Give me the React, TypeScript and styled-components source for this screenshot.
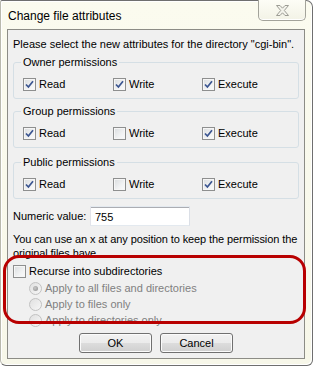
import React from 'react';
import styled, { createGlobalStyle } from 'styled-components';

const GlobalStyle = createGlobalStyle`
  html, body {
    margin: 0;
    padding: 0;
    background: #ffffff;
  }
  body {
    font-family: "Liberation Sans", Arial, sans-serif;
    font-size: 11px;
    color: #000000;
  }
`;

const Window = styled.div`
  box-sizing: border-box;
  width: 313px;
  height: 366px;
  display: flex;
  flex-direction: column;
  background: linear-gradient(180deg, #fbfbef 0%, #f7f7e9 100%);
  border: 1px solid #6f6f6f;
  border-left-color: #b9b9ad;
  border-radius: 2px 7px 6px 6px;
  box-shadow: inset -1px -1px 0 #ffffff, inset 1px 1px 0 #ffffff;
`;

const TitleBar = styled.div`
  flex: none;
  height: 28px;
  display: flex;
  justify-content: space-between;
  align-items: flex-start;
  padding-left: 7px;
`;

const Title = styled.span`
  margin-top: 8px;
  font-size: 12px;
  line-height: 15px;
`;

const CloseButton = styled.div`
  box-sizing: border-box;
  width: 48px;
  height: 21px;
  margin-top: -1px;
  margin-right: 6px;
  display: flex;
  align-items: center;
  justify-content: center;
  border: 1px solid #a3a39a;
  border-top: none;
  border-radius: 0 0 5px 5px;
  background: linear-gradient(180deg, #fdfdf6 0%, #f3f3e6 100%);
  box-shadow: inset 0 -1px 0 #ffffff;
`;

const Client = styled.div`
  box-sizing: border-box;
  margin: 0 7px 6px 6px;
  flex: 1;
  min-height: 0;
  display: flex;
  flex-direction: column;
  padding: 7px 5px 0 5px;
  background: #f0f0f0;
  border: 1px solid #8c8c86;
`;

const Text = styled.div<{ $muted?: boolean }>`
  font-size: 11px;
  line-height: 15px;
  color: ${(p) => (p.$muted ? '#808080' : '#000000')};
  white-space: nowrap;
`;

const Group = styled.fieldset<{ $top: number }>`
  margin: ${(p) => p.$top}px 0 0 0;
  padding: 6px 9px 6px 9px;
  border: 1px solid #d5dfe5;
  border-radius: 3px;
  min-width: 0;
`;

const Legend = styled.legend`
  padding: 0 2px;
  margin-left: -2px;
  font-size: 11px;
  line-height: 15px;
`;

const PermRow = styled.div`
  display: grid;
  grid-template-columns: 90px 89px auto;
  align-items: center;
`;

const Option = styled.label`
  display: flex;
  align-items: center;
  gap: 3px;
  height: 16px;
`;

const Box = styled.span`
  box-sizing: border-box;
  width: 13px;
  height: 13px;
  flex: none;
  display: flex;
  align-items: center;
  justify-content: center;
  border: 1px solid #8e8f8f;
  background: linear-gradient(135deg, #d9dcde 0%, #f1f2f3 60%, #fbfbfb 100%);
  box-shadow: inset 0 0 0 1px #f6f6f6;
`;

const Radio = styled.span`
  box-sizing: border-box;
  width: 13px;
  height: 13px;
  flex: none;
  border-radius: 50%;
  display: flex;
  align-items: center;
  justify-content: center;
  border: 1px solid #c2c2c2;
  background: linear-gradient(135deg, #e0e0e0 0%, #f7f7f7 100%);
`;

const Dot = styled.span`
  width: 5px;
  height: 5px;
  border-radius: 50%;
  background: radial-gradient(circle at 40% 40%, #c8c8c8, #8e8e8e);
`;

const NumericRow = styled.div`
  display: flex;
  align-items: center;
  margin-top: 7px;
`;

const NumLabel = styled.span`
  width: 77px;
  font-size: 11px;
  line-height: 15px;
`;

const NumInput = styled.div`
  box-sizing: border-box;
  width: 100px;
  height: 20px;
  padding: 1px 4px 0 4px;
  display: flex;
  align-items: center;
  background: #ffffff;
  border: 1px solid #abadb3;
  border-top-color: #e3e9ef;
  border-left-color: #e2e3ea;
  border-right-color: #dbdfe6;
  border-bottom-color: #e3e9ef;
  box-shadow: inset 0 1px 0 #abadb3;
`;

const Help = styled(Text)`
  margin-top: 6px;
  line-height: 14px;
  letter-spacing: -0.1px;
`;

const Recurse = styled.div`
  position: relative;
  margin-top: 3px;
  display: flex;
  flex-direction: column;
`;

const RadioList = styled.div`
  display: flex;
  flex-direction: column;
  padding-left: 16px;
  margin-top: 1px;
`;

const Highlight = styled.div`
  position: absolute;
  left: -10px;
  right: -7px;
  top: -8px;
  bottom: 4px;
  border: 3px solid #b80000;
  border-radius: 16px;
  pointer-events: none;
`;

const Buttons = styled.div`
  display: flex;
  justify-content: center;
  gap: 8px;
  margin-top: 5px;
`;

const Button = styled.button`
  box-sizing: border-box;
  width: 73px;
  height: 20px;
  padding: 0;
  font-family: inherit;
  font-size: 11px;
  color: #000000;
  border: 1px solid #707070;
  border-radius: 3px;
  background: linear-gradient(180deg, #f2f2f2 0%, #ebebeb 49%, #dddddd 50%, #cfcfcf 100%);
  box-shadow: inset 0 0 0 1px #fbfbfb;
`;

const Check = () => (
  <svg width="9" height="9" viewBox="0 0 9 9">
    <path d="M1 4.5 L3.4 7 L8 1.2" fill="none" stroke="#3b5591" strokeWidth="1.7" />
  </svg>
);

const CloseGlyph = () => (
  <svg width="15" height="11" viewBox="0 0 15 11">
    <path
      d="M1.5 0.5 H5 L7.5 3.2 L10 0.5 H13.5 L9.3 5.5 L13.5 10.5 H10 L7.5 7.8 L5 10.5 H1.5 L5.7 5.5 Z"
      fill="#f4f4ec"
      stroke="#9c9c94"
      strokeWidth="1"
    />
  </svg>
);

const CheckOption: React.FC<{ label: string; checked?: boolean }> = ({ label, checked }) => (
  <Option>
    <Box>{checked && <Check />}</Box>
    <span>{label}</span>
  </Option>
);

const groups = [
  { title: 'Owner permissions', values: [true, true, true], top: 3 },
  { title: 'Group permissions', values: [true, false, true], top: 5 },
  { title: 'Public permissions', values: [true, false, true], top: 7 },
];

const radios = [
  { label: 'Apply to all files and directories', selected: true },
  { label: 'Apply to files only', selected: false },
  { label: 'Apply to directories only', selected: false },
];

export default function App() {
  return (
    <>
      <GlobalStyle />
      <Window>
        <TitleBar>
          <Title>Change file attributes</Title>
          <CloseButton>
            <CloseGlyph />
          </CloseButton>
        </TitleBar>
        <Client>
          <Text>Please select the new attributes for the directory "cgi-bin".</Text>
          {groups.map((g) => (
            <Group key={g.title} $top={g.top}>
              <Legend>{g.title}</Legend>
              <PermRow>
                <CheckOption label="Read" checked={g.values[0]} />
                <CheckOption label="Write" checked={g.values[1]} />
                <CheckOption label="Execute" checked={g.values[2]} />
              </PermRow>
            </Group>
          ))}
          <NumericRow>
            <NumLabel>Numeric value:</NumLabel>
            <NumInput>755</NumInput>
          </NumericRow>
          <Help>
            You can use an x at any position to keep the permission the
            <br />
            original files have.
          </Help>
          <Recurse>
            <CheckOption label="Recurse into subdirectories" />
            <RadioList>
              {radios.map((r) => (
                <Option key={r.label}>
                  <Radio>{r.selected && <Dot />}</Radio>
                  <Text $muted>{r.label}</Text>
                </Option>
              ))}
            </RadioList>
            <Highlight />
          </Recurse>
          <Buttons>
            <Button>OK</Button>
            <Button>Cancel</Button>
          </Buttons>
        </Client>
      </Window>
    </>
  );
}
